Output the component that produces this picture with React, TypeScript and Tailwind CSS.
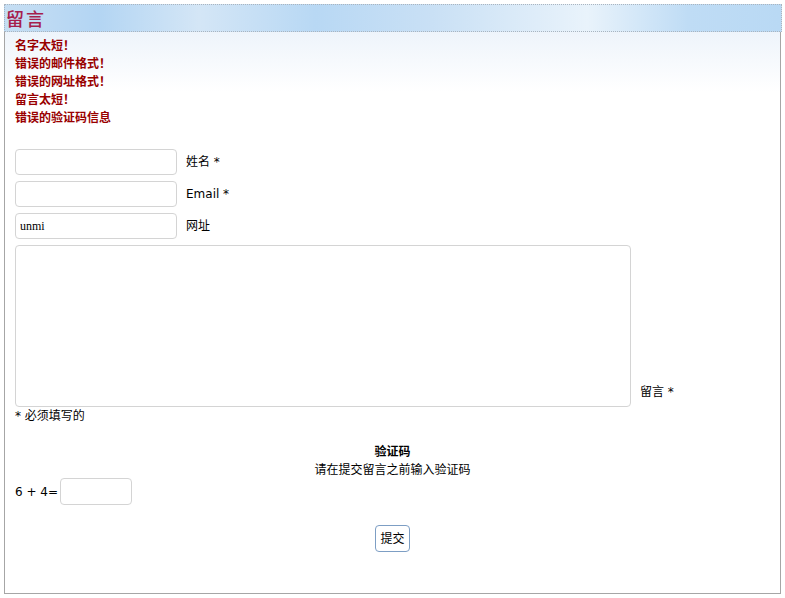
import React from 'react'

const errors = ['名字太短！', '错误的邮件格式！', '错误的网址格式！', '留言太短！', '错误的验证码信息']

const font = { fontFamily: '"DejaVu Sans", "Noto Sans CJK SC", sans-serif' }

export default function App() {
  return (
    <div className="w-[785px] h-[598px] bg-white text-[12px] text-black" style={font}>
      <div className="pt-[4px] pl-[4px] w-[782px]">
        {/* header band */}
        <div className="h-[28px] border border-dotted border-[#aab4bf] bg-[linear-gradient(90deg,#c6def3_0%,#b3d5f3_12%,#d4e6f6_25%,#b8d8f4_40%,#c9e0f5_55%,#e9f3fb_75%,#bfdcf5_88%,#b9d9f4_100%)] flex items-center px-[1px]">
          <span
            className="text-[18px] leading-none font-medium text-[#a61e4d] tracking-[2px]"
            style={{ fontFamily: '"Noto Sans CJK SC", sans-serif' }}
          >
            留言
          </span>
        </div>
        {/* body */}
        <div className="w-[777px] h-[562px] border-l border-r border-b border-[#a6a6a6] bg-[linear-gradient(180deg,#eef4fb_0px,#ffffff_60px)] pl-[10px] pt-[5px]">
          <div className="flex flex-col font-bold text-[#990000] leading-[18px]">
            {errors.map((e) => (
              <div key={e}>{e}</div>
            ))}
          </div>

          <div className="mt-[22px] flex flex-col gap-[6px]">
            <div className="flex items-center">
              <input className="w-[162px] h-[26px] border border-[#d4d4d4] rounded-[4px] px-[4px] outline-none" />
              <span className="ml-[9px]">姓名 *</span>
            </div>
            <div className="flex items-center">
              <input className="w-[162px] h-[26px] border border-[#d4d4d4] rounded-[4px] px-[4px] outline-none" />
              <span className="ml-[9px]">Email *</span>
            </div>
            <div className="flex items-center">
              <input
                defaultValue="unmi"
                className="w-[162px] h-[26px] border border-[#d4d4d4] rounded-[4px] px-[4px] outline-none text-[12px]"
                style={{ fontFamily: '"Liberation Serif", serif' }}
              />
              <span className="ml-[9px]">网址</span>
            </div>
            <div className="flex items-end">
              <textarea className="w-[616px] h-[162px] border border-[#d4d4d4] rounded-[4px] resize-none outline-none" />
              <span className="ml-[9px] mb-[6px]">留言 *</span>
            </div>
          </div>

          <div className="mt-[1px] leading-[16px]">* 必须填写的</div>

          <div className="mt-[19px] text-center leading-[18px] pr-[10px]">
            <div className="font-bold">验证码</div>
            <div>请在提交留言之前输入验证码</div>
          </div>

          <div className="-mt-[1px] flex items-center">
            <span>6 + 4=</span>
            <input className="ml-[2px] w-[72px] h-[27px] border border-[#d4d4d4] rounded-[4px] outline-none" />
          </div>

          <div className="mt-[20px] flex justify-center pr-[10px]">
            <button className="h-[27px] px-[4px] border border-[#7d9ec4] rounded-[4px] bg-white text-[12px]">
              提交
            </button>
          </div>
        </div>
      </div>
    </div>
  )
}
